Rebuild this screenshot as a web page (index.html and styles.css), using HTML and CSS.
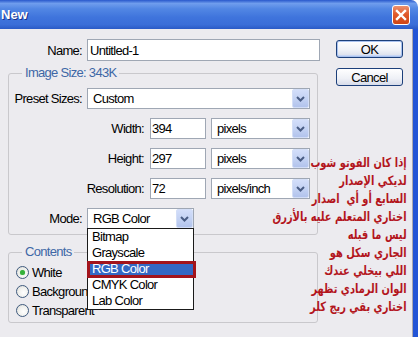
FILE: index.html
```html
<!DOCTYPE html>
<html lang="en">
<head>
<meta charset="utf-8">
<title>New</title>
<link rel="stylesheet" href="styles.css">
</head>
<body>
<div class="window">
  <div class="titlebar">
    <span class="title">New</span>
    <span class="close"><svg width="12" height="12" viewBox="0 0 12 12"><path d="M2 2L10 10M10 2L2 10" stroke="#fff" stroke-width="2.4" stroke-linecap="square"/></svg></span>
  </div>
  <div class="frame">
    <div class="client">
      <div class="left">
        <div class="row name-row">
          <span class="lbl lbl-short">Name:</span>
          <span class="field name-field">Untitled-1</span>
        </div>
        <fieldset class="group size-group">
          <legend>Image Size: 343K</legend>
          <div class="rows">
            <div class="row">
              <span class="lbl lbl-short">Preset Sizes:</span>
              <span class="combo combo-wide"><span class="combo-text">Custom</span><span class="arrow"><svg width="9" height="6" viewBox="0 0 9 6"><path d="M1 1l3.5 3.5L8 1" fill="none" stroke="#4a5d85" stroke-width="2"/></svg></span></span>
            </div>
            <div class="row">
              <span class="lbl lbl-long">Width:</span>
              <span class="field num-field">394</span>
              <span class="combo combo-unit"><span class="combo-text">pixels</span><span class="arrow"><svg width="9" height="6" viewBox="0 0 9 6"><path d="M1 1l3.5 3.5L8 1" fill="none" stroke="#4a5d85" stroke-width="2"/></svg></span></span>
            </div>
            <div class="row">
              <span class="lbl lbl-long">Height:</span>
              <span class="field num-field">297</span>
              <span class="combo combo-unit"><span class="combo-text">pixels</span><span class="arrow"><svg width="9" height="6" viewBox="0 0 9 6"><path d="M1 1l3.5 3.5L8 1" fill="none" stroke="#4a5d85" stroke-width="2"/></svg></span></span>
            </div>
            <div class="row">
              <span class="lbl lbl-long">Resolution:</span>
              <span class="field num-field">72</span>
              <span class="combo combo-unit"><span class="combo-text">pixels/inch</span><span class="arrow"><svg width="9" height="6" viewBox="0 0 9 6"><path d="M1 1l3.5 3.5L8 1" fill="none" stroke="#4a5d85" stroke-width="2"/></svg></span></span>
            </div>
            <div class="row">
              <span class="lbl lbl-short">Mode:</span>
              <span class="combo combo-mode"><span class="combo-text">RGB Color</span><span class="arrow"><svg width="9" height="6" viewBox="0 0 9 6"><path d="M1 1l3.5 3.5L8 1" fill="none" stroke="#4a5d85" stroke-width="2"/></svg></span></span>
            </div>
          </div>
        </fieldset>
        <fieldset class="group contents-group">
          <legend>Contents</legend>
          <div class="radios">
            <div class="radio-row"><span class="radio checked"></span><span>White</span></div>
            <div class="radio-row"><span class="radio"></span><span>Background Color</span></div>
            <div class="radio-row"><span class="radio"></span><span>Transparent</span></div>
          </div>
        </fieldset>
      </div>
      <div class="buttons">
        <span class="btn btn-default">OK</span>
        <span class="btn">Cancel</span>
      </div>
    </div>
  </div>

  <ul class="dropdown">
    <li>Bitmap</li>
    <li>Grayscale</li>
    <li class="selected">RGB Color</li>
    <li>CMYK Color</li>
    <li>Lab Color</li>
  </ul>
  <div class="mark"></div>

  <div class="note" dir="rtl" lang="ar">
    <p>إذا كان الفوتو شوب</p>
    <p>لديكي الإصدار</p>
    <p>السابع أو أي&nbsp; اصدار</p>
    <p>اختاري المتعلم عليه بالأزرق</p>
    <p>ليس ما قبله</p>
    <p>الجاري سكل هو</p>
    <p>اللي بيخلي عندك</p>
    <p>الوان الرمادي تظهر</p>
    <p>اختاري بقي ريج كلر</p>
  </div>
</div>
</body>
</html>
```
FILE: styles.css
```css
* { box-sizing: border-box; }
html, body { margin: 0; padding: 0; background: #ffffff; }
body {
  width: 420px;
  height: 337px;
  overflow: hidden;
  font-family: "Liberation Sans", Arial, sans-serif;
  font-size: 13px;
  letter-spacing: -0.7px;
  color: #000;
}
.window {
  position: relative;
  width: 418px;
  height: 337px;
  display: flex;
  flex-direction: column;
}
.titlebar {
  flex: none;
  height: 29px;
  display: flex;
  align-items: center;
  justify-content: space-between;
  padding: 0 8px 0 1px;
  border-top-right-radius: 7px;
  background: linear-gradient(to bottom, #2858cc 0%, #6f9ded 12%, #5287e4 30%, #3f74dc 60%, #3a6ed8 85%, #2a5ac6 100%);
}
.title {
  color: #fff;
  font-weight: bold;
  font-size: 13px;
  letter-spacing: 0;
  text-shadow: 1px 1px 0 #17338a;
}
.close {
  width: 18px;
  height: 20px;
  margin-top: 1px;
  border: 1px solid #fff;
  border-radius: 3px;
  background: linear-gradient(to bottom, #ec9270 0%, #e05a2c 45%, #cf4515 100%);
  display: flex;
  align-items: center;
  justify-content: center;
}
.frame {
  flex: 1;
  display: flex;
  border-right: 5px solid #2355d6;
}
.client {
  flex: 1;
  display: flex;
  background: #ecebef;
  border-right: 1px solid #a9a8b0;
  padding-top: 10px;
}
.left { width: 320px; }
.row {
  display: flex;
  align-items: center;
  height: 21px;
  white-space: nowrap;
}
.name-row { height: 22px; }
.lbl { text-align: right; flex: none; }
.lbl-short { width: 82px; margin-right: 5px; }
.size-group .lbl-short { width: 73px; }
.lbl-long { width: 135px; margin-right: 6px; }
.field {
  flex: none;
  height: 100%;
  background: #fff;
  border: 1px solid #9fa7b4;
  display: flex;
  align-items: center;
  padding-left: 2px;
}
.name-field { width: 233px; }
.num-field { width: 56px; margin-right: 5px; padding-left: 1px; }
.combo {
  flex: none;
  height: 100%;
  background: #fff;
  border: 1px solid #9fa7b4;
  display: flex;
  align-items: stretch;
  justify-content: space-between;
}
.combo-text { padding-left: 5px; display: flex; align-items: center; }
.combo-wide { width: 223px; }
.combo-unit { width: 99px; }
.combo-mode { width: 107px; }
.arrow {
  width: 17px;
  border: 1px solid #d3def7;
  border-radius: 2px;
  background: linear-gradient(to bottom, #d3defa 0%, #c1d0f2 60%, #b2c3ec 100%);
  display: flex;
  align-items: center;
  justify-content: center;
}
.group {
  margin: 0 0 0 8px;
  padding: 0;
  width: 310px;
  border: 1px solid #c9c8cc;
  border-radius: 3px;
  min-width: 0;
}
.group legend {
  margin-left: 13px;
  padding: 0 3px;
  line-height: 14px;
  color: #3e67a6;
}
.size-group { margin-top: 5px; }
.rows {
  display: flex;
  flex-direction: column;
  gap: 9px;
  padding: 8px 0 5px 0;
}
.contents-group { margin-top: 10px; }
.radios { padding: 4px 0 2px 7px; }
.radio-row {
  display: flex;
  align-items: center;
  gap: 3px;
  height: 19px;
  white-space: nowrap;
}
.radio {
  flex: none;
  width: 13px;
  height: 13px;
  border-radius: 50%;
  border: 1px solid #3f5a7e;
  background: radial-gradient(circle at 60% 60%, #ffffff 0%, #f1f1ee 50%, #d6d6d0 100%);
  display: flex;
  align-items: center;
  justify-content: center;
}
.radio.checked::after {
  content: "";
  width: 5px;
  height: 5px;
  border-radius: 50%;
  background: #35b13a;
  box-shadow: 0 0 1px #7ed27f;
}
.buttons {
  margin-left: 16px;
  padding-top: 1px;
  display: flex;
  flex-direction: column;
  gap: 10px;
}
.btn {
  width: 67px;
  height: 18px;
  border: 1px solid #1c3f7a;
  border-radius: 3px;
  background: linear-gradient(to bottom, #ffffff 0%, #eef0f6 60%, #d7dcea 100%);
  display: flex;
  align-items: center;
  justify-content: center;
  line-height: 1;
}
.btn-default {
  box-shadow: inset 0 0 0 1px #a9c2ef, inset 0 -1px 0 1px #c7d6f5;
}
.dropdown {
  position: absolute;
  left: 87px;
  top: 228px;
  width: 107px;
  height: 82px;
  margin: 0;
  padding: 0;
  list-style: none;
  background: #fff;
  border: 1px solid #1a1a1a;
}
.dropdown li {
  height: 16px;
  line-height: 16px;
  padding-left: 4px;
  white-space: nowrap;
}
.dropdown li.selected {
  background: #3368c4;
  color: #fff;
}
.mark {
  position: absolute;
  left: 87px;
  top: 261px;
  width: 109px;
  height: 17px;
  border: 3px solid #a3141c;
}
.note {
  position: absolute;
  right: 11px;
  top: 154px;
  text-align: right;
  color: #b3161d;
  font-family: "DejaVu Sans", sans-serif;
  font-weight: bold;
  font-size: 13px;
  letter-spacing: 0;
  line-height: 18px;
  white-space: nowrap;
  transform: scaleX(0.76);
  transform-origin: right center;
}
.note p { margin: 0; }
```
